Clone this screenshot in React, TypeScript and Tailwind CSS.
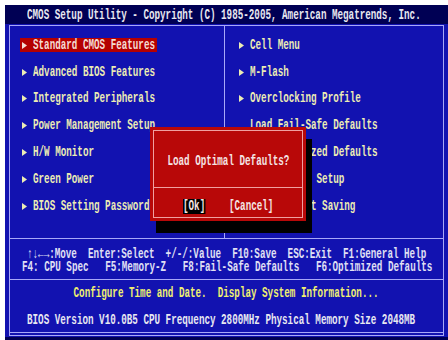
import type { ReactNode } from "react";

const leftItems = [
  "Standard CMOS Features",
  "Advanced BIOS Features",
  "Integrated Peripherals",
  "Power Management Setup",
  "H/W Monitor",
  "Green Power",
  "BIOS Setting Password",
];

const rightItems = [
  { label: "Cell Menu", arrow: true },
  { label: "M-Flash", arrow: true },
  { label: "Overclocking Profile", arrow: true },
  { label: "Load Fail-Safe Defaults", arrow: false },
  { label: "Load Optimized Defaults", arrow: false },
  { label: "Save & Exit Setup", arrow: false },
  { label: "Exit Without Saving", arrow: false },
];

// narrow bitmap-ish BIOS font: mono glyphs squeezed horizontally
function Bios({ children, className = "" }: { children: ReactNode; className?: string }) {
  return (
    <span className={`inline-block shrink-0 whitespace-pre scale-x-[0.66] ${className}`}>
      {children}
    </span>
  );
}

function Arrow({ hidden = false }: { hidden?: boolean }) {
  return (
    <svg width="5" height="7" viewBox="0 0 5 7" className={hidden ? "invisible shrink-0" : "shrink-0"}>
      <path d="M0 0 L5 3.5 L0 7 Z" fill="currentColor" />
    </svg>
  );
}

export default function App() {
  return (
    <div className="h-[340px] w-[448px] overflow-hidden bg-white pl-[5px] pt-[5px] font-['Liberation_Mono',monospace] text-[14px] font-bold leading-[13px]">
      <div className="flex h-full flex-col bg-[#1212b0]">
        {/* title bar */}
        <div className="flex h-[19px] shrink-0 items-center bg-[#000054] pl-[22px] pt-[2px] text-[#e8e8f0]">
          <Bios className="origin-left">CMOS Setup Utility - Copyright (C) 1985-2005, American Megatrends, Inc.</Bios>
        </div>

        <div className="flex-1 px-[4px] pb-[1px] pt-[1px]">
          <div className="flex h-full flex-col border border-[#a8a8f8]">
            {/* main menu */}
            <div className="relative flex h-[213px] shrink-0 border-b border-[#a8a8f8]">
              <div className="w-[215px] shrink-0 border-r border-[#a8a8f8] pt-[6px] text-[#ececb4]">
                {leftItems.map((item, i) => (
                  <div key={item} className="flex h-[26.8px] items-center pl-[10px]">
                    <div
                      className={`flex h-[14px] w-[137px] items-center gap-[6px] px-[2px] ${
                        i === 0 ? "bg-[#b40000] text-[#f4dcd4]" : ""
                      }`}
                    >
                      <Arrow />
                      <Bios className="origin-left">{item}</Bios>
                    </div>
                  </div>
                ))}
              </div>
              <div className="flex-1 pt-[6px] text-[#ececb4]">
                {rightItems.map((item) => (
                  <div key={item.label} className="flex h-[26.8px] items-center gap-[6px] pl-[14px]">
                    <Arrow hidden={!item.arrow} />
                    <Bios className="origin-left">{item.label}</Bios>
                  </div>
                ))}
              </div>

              {/* confirm dialog */}
              <div className="absolute left-[140px] top-[101px] h-[94px] w-[156px] bg-[#b80808] p-[3px] text-[#f4e4e4] shadow-[6px_12px_0_0_#000]">
                <div className="flex h-full flex-col border border-[#f0a0a0]">
                  <div className="flex h-[57px] shrink-0 items-center justify-center border-b border-[#f0a0a0] pt-[4px]">
                    <Bios>Load Optimal Defaults?</Bios>
                  </div>
                  <div className="flex flex-1 items-center justify-center gap-[24px] pt-[7px]">
                    <div className="w-[22px]">
                      <Bios className="origin-left bg-black py-[1px]">[Ok]</Bios>
                    </div>
                    <div className="w-[44px]">
                      <Bios className="origin-left">[Cancel]</Bios>
                    </div>
                  </div>
                </div>
              </div>
            </div>

            {/* key help */}
            <div className="flex h-[41px] shrink-0 flex-col border-b border-[#a8a8f8] pt-[9px] text-[#e0e0f4]">
              <div className="pl-[17px]">
                <Bios className="origin-left">↑↓←→:Move  Enter:Select  +/-/:Value  F10:Save  ESC:Exit  F1:General Help</Bios>
              </div>
              <div className="pl-[12px]">
                <Bios className="origin-left">F4: CPU Spec   F5:Memory-Z   F8:Fail-Safe Defaults   F6:Optimized Defaults</Bios>
              </div>
            </div>

            {/* info */}
            <div className="flex h-[53px] shrink-0 flex-col gap-[14px] border-b border-[#a8a8f8] pt-[7px]">
              <div className="flex justify-center text-[#f0f070]">
                <Bios>Configure Time and Date.  Display System Information...</Bios>
              </div>
              <div className="pl-[17px] text-[#e8e8f0]">
                <Bios className="origin-left">BIOS Version V10.0B5 CPU Frequency 2800MHz Physical Memory Size 2048MB</Bios>
              </div>
            </div>
          </div>
        </div>
        <div className="h-[3px] shrink-0 bg-[#000054]" />
      </div>
    </div>
  );
}
